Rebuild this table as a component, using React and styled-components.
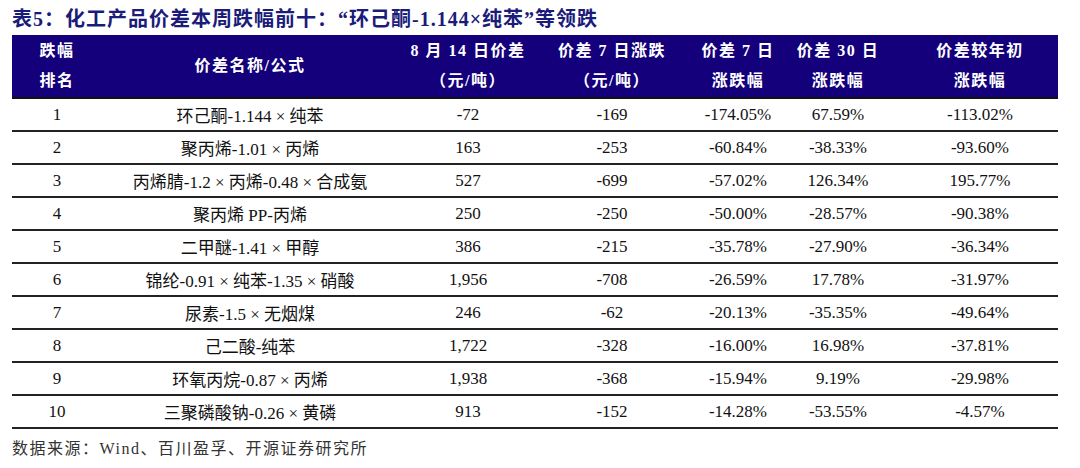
import React from 'react';
import styled, { createGlobalStyle } from 'styled-components';

const GlobalStyle = createGlobalStyle`
  html, body {
    margin: 0;
    padding: 0;
    background: #fff;
  }
  body {
    font-family: "Liberation Serif", "Noto Sans CJK SC", serif;
  }
`;

const COLS = '90px 296px 140px 148px 104px 96px 172px';

const rows = [
  ['1', '环己酮-1.144 × 纯苯', '-72', '-169', '-174.05%', '67.59%', '-113.02%'],
  ['2', '聚丙烯-1.01 × 丙烯', '163', '-253', '-60.84%', '-38.33%', '-93.60%'],
  ['3', '丙烯腈-1.2 × 丙烯-0.48 × 合成氨', '527', '-699', '-57.02%', '126.34%', '195.77%'],
  ['4', '聚丙烯 PP-丙烯', '250', '-250', '-50.00%', '-28.57%', '-90.38%'],
  ['5', '二甲醚-1.41 × 甲醇', '386', '-215', '-35.78%', '-27.90%', '-36.34%'],
  ['6', '锦纶-0.91 × 纯苯-1.35 × 硝酸', '1,956', '-708', '-26.59%', '17.78%', '-31.97%'],
  ['7', '尿素-1.5 × 无烟煤', '246', '-62', '-20.13%', '-35.35%', '-49.64%'],
  ['8', '己二酸-纯苯', '1,722', '-328', '-16.00%', '16.98%', '-37.81%'],
  ['9', '环氧丙烷-0.87 × 丙烯', '1,938', '-368', '-15.94%', '9.19%', '-29.98%'],
  ['10', '三聚磷酸钠-0.26 × 黄磷', '913', '-152', '-14.28%', '-53.55%', '-4.57%'],
];

const headers = [
  ['跌幅', '排名'],
  ['价差名称/公式'],
  ['8 月 14 日价差', '（元/吨）'],
  ['价差 7 日涨跌', '（元/吨）'],
  ['价差 7 日', '涨跌幅'],
  ['价差 30 日', '涨跌幅'],
  ['价差较年初', '涨跌幅'],
];

const Page = styled.div`
  width: 1046px;
  padding: 0 22px 0 12px;
`;

const Title = styled.h1`
  margin: 0;
  height: 35px;
  display: flex;
  align-items: center;
  padding-bottom: 1px;
  box-sizing: border-box;
  font-size: 20px;
  font-weight: bold;
  letter-spacing: 1px;
  color: #1b1b7a;
  white-space: nowrap;
`;

const HeadRow = styled.div`
  display: grid;
  grid-template-columns: ${COLS};
  height: 62px;
  background: #13007a;
  border-bottom: 2px solid #111;
`;

const HeadCell = styled.div`
  display: flex;
  flex-direction: column;
  justify-content: center;
  align-items: center;
  padding-left: ${(p) => (p.$last ? '16px' : '0')};
  color: #fff;
  font-size: 16px;
  font-weight: bold;
  letter-spacing: 1.5px;
  line-height: 30px;
  white-space: nowrap;
`;

const Row = styled.div`
  display: grid;
  grid-template-columns: ${COLS};
  height: 33px;
  box-sizing: border-box;
  border-bottom: 2px solid #222;
`;

const Cell = styled.div`
  display: flex;
  align-items: center;
  justify-content: center;
  padding-left: ${(p) => (p.$last ? '16px' : '0')};
  font-size: 17px;
  color: #111;
  white-space: nowrap;
`;

const Source = styled.div`
  height: 34px;
  display: flex;
  align-items: center;
  padding-top: 2px;
  box-sizing: border-box;
  font-size: 16px;
  letter-spacing: 1.5px;
  color: #333;
`;

export default function App() {
  return (
    <>
      <GlobalStyle />
      <Page>
        <Title>表5：化工产品价差本周跌幅前十：“环己酮-1.144×纯苯”等领跌</Title>
        <HeadRow>
          {headers.map((lines, i) => (
            <HeadCell key={i} $last={i === headers.length - 1}>
              {lines.map((l) => (
                <span key={l}>{l}</span>
              ))}
            </HeadCell>
          ))}
        </HeadRow>
        {rows.map((r) => (
          <Row key={r[0]}>
            {r.map((v, i) => (
              <Cell key={i} $last={i === r.length - 1}>
                {v}
              </Cell>
            ))}
          </Row>
        ))}
        <Source>数据来源：Wind、百川盈孚、开源证券研究所</Source>
      </Page>
    </>
  );
}
